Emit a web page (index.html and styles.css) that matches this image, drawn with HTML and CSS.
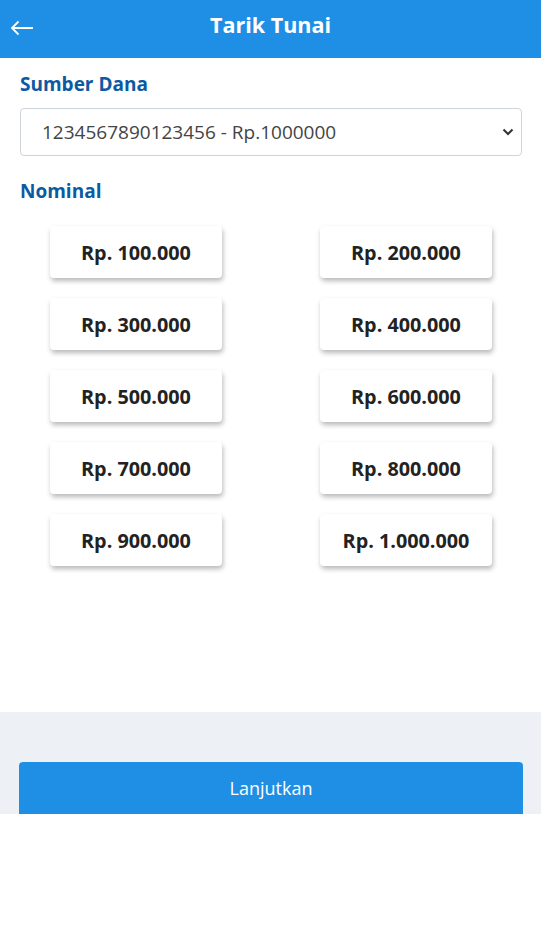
FILE: index.html
```html
<!DOCTYPE html>
<html>
<head>
<meta charset="utf-8">
<link rel="stylesheet" href="styles.css">
</head>
<body>
<header class="topbar">
  <button class="back" aria-label="Kembali">
    <svg width="24" height="16" viewBox="0 0 24 16"><path d="M23 8H2M8.5 1.5L2 8l6.5 6.5" fill="none" stroke="#fff" stroke-width="1.8"/></svg>
  </button>
  <h1 class="title">Tarik Tunai</h1>
</header>
<main class="content">
  <label class="label">Sumber Dana</label>
  <div class="select">
    <span>1234567890123456 - Rp.1000000</span>
    <svg class="chev" width="12" height="8" viewBox="0 0 12 8"><path d="M1.5 1.5L6 6l4.5-4.5" fill="none" stroke="#333" stroke-width="2"/></svg>
  </div>
  <label class="label nominal">Nominal</label>
  <div class="grid">
    <div class="cell"><button class="amt">Rp. 100.000</button></div>
    <div class="cell"><button class="amt">Rp. 200.000</button></div>
    <div class="cell"><button class="amt">Rp. 300.000</button></div>
    <div class="cell"><button class="amt">Rp. 400.000</button></div>
    <div class="cell"><button class="amt">Rp. 500.000</button></div>
    <div class="cell"><button class="amt">Rp. 600.000</button></div>
    <div class="cell"><button class="amt">Rp. 700.000</button></div>
    <div class="cell"><button class="amt">Rp. 800.000</button></div>
    <div class="cell"><button class="amt">Rp. 900.000</button></div>
    <div class="cell"><button class="amt">Rp. 1.000.000</button></div>
  </div>
</main>
<footer class="footer">
  <button class="primary">Lanjutkan</button>
</footer>
</body>
</html>
```
FILE: styles.css
```css
* { box-sizing: border-box; }
html, body { margin: 0; padding: 0; background: #fff; }
body { font-family: "Open Sans", "Noto Sans", sans-serif; width: 541px; }
.topbar {
  height: 58px; background: #1f8fe5; display: flex; align-items: center;
  justify-content: center; position: relative;
}
.back {
  position: absolute; left: 10px; top: 20px; background: none; border: 0; padding: 0;
  width: 24px; height: 16px; display: block;
}
.back svg { display: block; }
.title { margin: 0; color: #fff; font-size: 21.5px; font-weight: 700; line-height: 1; padding-bottom: 8px; }
.content { padding: 14px 19px 0 20px; height: 654px; }
.label { display: block; color: #0b5aa2; font-weight: 700; font-size: 19px; line-height: 24px; }
.select {
  margin-top: 12px; height: 48px; border: 1px solid #cfd4da; border-radius: 4px;
  display: flex; align-items: center; justify-content: space-between;
  padding: 0 7px 0 21px; color: #444; font-size: 19px;
}
.chev { display: block; }
.nominal { margin-top: 23px; }
.grid {
  margin: 23px -19px 0 -20px; padding-left: 1px; display: grid; grid-template-columns: 1fr 1fr; row-gap: 20px;
}
.cell { display: flex; justify-content: center; }
.amt {
  width: 172px; height: 52px; background: #fff; border: 0; border-radius: 4px;
  box-shadow: 1px 3px 5px rgba(0,0,0,0.28); font-family: inherit; font-weight: 700;
  font-size: 19.8px; color: #222;
}
.footer { background: #edf0f5; height: 102px; padding: 50px 18px 0 19px; display: flex; align-items: flex-end; }
.primary {
  width: 100%; height: 52px; background: #1f8fe5; color: #fff; border: 0; border-radius: 4px 4px 0 0;
  font-family: inherit; font-size: 18px;
}
```
